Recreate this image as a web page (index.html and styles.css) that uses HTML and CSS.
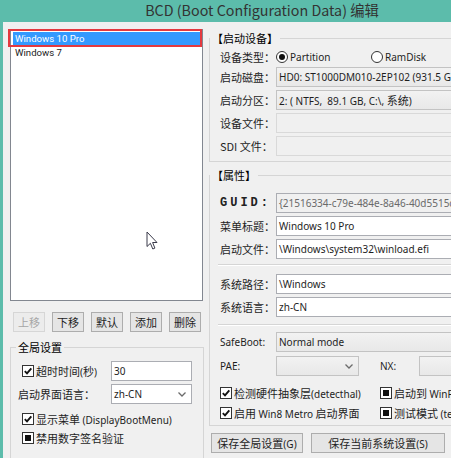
FILE: index.html
```html
<!DOCTYPE html>
<html lang="zh-CN">
<head>
    <meta charset="UTF-8">
    <title>BCD (Boot Configuration Data) 编辑</title>
    <link rel="stylesheet" href="styles.css">
</head>
<body>
<div class="window">
    <div class="titlebar">BCD (Boot Configuration Data) 编辑</div>

    <div class="client">
        <!-- 左侧：启动项列表 + 全局设置 -->
        <div class="left">
            <ul class="bootlist">
                <li class="selected">Windows 10 Pro</li>
                <li>Windows 7</li>
            </ul>

            <div class="list-buttons">
                <button class="btn small" disabled>上移</button>
                <button class="btn small">下移</button>
                <button class="btn small">默认</button>
                <button class="btn small">添加</button>
                <button class="btn small">删除</button>
            </div>

            <fieldset class="group global">
                <legend>全局设置</legend>
                <div class="rows">
                    <div class="grow">
                        <div class="cap check-cap"><span class="chk on"><svg viewBox="0 0 10 10"><path d="M1.8 5.2 L4 7.4 L8.3 2.4"/></svg></span><span>超时时间<span class="en">(</span>秒<span class="en">)</span></span></div>
                        <div class="box white short">30</div>
                    </div>
                    <div class="grow">
                        <div class="cap">启动界面语言：</div>
                        <div class="box white short combo">zh-CN<svg class="chev" viewBox="0 0 8 5"><polyline points="0.5,0.5 4,4 7.5,0.5"/></svg></div>
                    </div>
                    <div class="crow first">
                        <span class="chk on"><svg viewBox="0 0 10 10"><path d="M1.8 5.2 L4 7.4 L8.3 2.4"/></svg></span><span>显示菜单 <span class="en">(DisplayBootMenu)</span></span>
                    </div>
                    <div class="crow">
                        <span class="chk mixed"></span><span>禁用数字签名验证</span>
                    </div>
                </div>
            </fieldset>
        </div>

        <!-- 右侧：当前启动项的设置 -->
        <div class="right">
            <fieldset class="group device">
                <legend>【启动设备】</legend>
                <div class="rows">
                    <div class="frow radios">
                        <span class="lbl">设备类型：</span>
                        <span class="opt"><span class="radio on"></span><span class="en">Partition</span></span>
                        <span class="opt"><span class="radio"></span><span class="en">RamDisk</span></span>
                    </div>
                    <div class="frow">
                        <span class="lbl">启动磁盘：</span>
                        <div class="box gray">HD0: ST1000DM010-2EP102 (931.5 GB)</div>
                    </div>
                    <div class="frow">
                        <span class="lbl">启动分区：</span>
                        <div class="box gray">2: ( NTFS,  89.1 GB, C:\, <span class="zh">系统</span>)</div>
                    </div>
                    <div class="frow">
                        <span class="lbl">设备文件：</span>
                        <div class="box off"></div>
                    </div>
                    <div class="frow">
                        <span class="lbl">SDI 文件：</span>
                        <div class="box off"></div>
                    </div>
                </div>
            </fieldset>

            <fieldset class="group props">
                <legend>【属性】</legend>
                <div class="rows">
                    <div class="frow">
                        <span class="lbl guid">GUID:</span>
                        <div class="box readonly">{21516334-c79e-484e-8a46-40d5515c</div>
                    </div>
                    <div class="frow">
                        <span class="lbl">菜单标题：</span>
                        <div class="box white">Windows 10 Pro</div>
                    </div>
                    <div class="frow">
                        <span class="lbl">启动文件：</span>
                        <div class="box white">\Windows\system32\winload.efi</div>
                    </div>

                    <div class="sep sep1"></div>

                    <div class="frow path">
                        <span class="lbl">系统路径：</span>
                        <div class="box white">\Windows</div>
                    </div>
                    <div class="frow">
                        <span class="lbl">系统语言：</span>
                        <div class="box white">zh-CN</div>
                    </div>

                    <div class="sep sep2"></div>

                    <div class="frow safeboot">
                        <span class="lbl en">SafeBoot:</span>
                        <div class="box gray">Normal mode</div>
                    </div>
                    <div class="frow pae">
                        <span class="lbl en">PAE:</span>
                        <div class="box gray pae-box combo"><svg class="chev" viewBox="0 0 8 5"><polyline points="0.5,0.5 4,4 7.5,0.5"/></svg></div>
                        <span class="lbl nx en">NX:</span>
                        <div class="box gray"></div>
                    </div>

                    <div class="crow two first">
                        <span class="c1"><span class="chk on"><svg viewBox="0 0 10 10"><path d="M1.8 5.2 L4 7.4 L8.3 2.4"/></svg></span><span>检测硬件抽象层<span class="en">(detecthal)</span></span></span>
                        <span class="c2"><span class="chk mixed"></span><span>启动到 <span class="en">WinPE</span></span></span>
                    </div>
                    <div class="crow two">
                        <span class="c1"><span class="chk on"><svg viewBox="0 0 10 10"><path d="M1.8 5.2 L4 7.4 L8.3 2.4"/></svg></span><span>启用 <span class="en">Win8 Metro</span> 启动界面</span></span>
                        <span class="c2"><span class="chk mixed"></span><span>测试模式 <span class="en">(testsigning)</span></span></span>
                    </div>
                </div>
            </fieldset>

            <div class="save-buttons">
                <button class="btn save-global">保存全局设置<span class="en">(G)</span></button>
                <button class="btn save-current">保存当前系统设置<span class="en">(S)</span></button>
            </div>
        </div>
    </div>

    <!-- 鼠标指针 -->
    <svg class="cursor" viewBox="0 0 13 20">
        <path d="M1 1 L1 15.5 L4.4 12.3 L6.8 18 L8.9 17.1 L6.6 11.5 L11 11.5 Z"/>
    </svg>
</div>
</body>
</html>
```

FILE: styles.css
```css
* {
    box-sizing: border-box;
}

html, body {
    margin: 0;
    padding: 0;
}

body {
    width: 451px;
    height: 458px;
    overflow: hidden;
    background: #f0f0f0;
    font-family: "Noto Sans CJK SC", "Noto Sans", sans-serif;
    font-size: 11px;
    color: #1e1e1e;
}

/* 西文部分 */
.en,
.box {
    font-family: "Noto Sans", "Noto Sans CJK SC", sans-serif;
    font-size: 10px;
}

.box .zh {
    font-family: "Noto Sans CJK SC", sans-serif;
    font-size: 11px;
}

.window {
    position: relative;
    width: 524px;
    height: 458px;
    overflow: hidden;
}

/* 标题栏 */
.titlebar {
    height: 22px;
    padding-bottom: 2px;
    background: #5cbcab;
    display: flex;
    justify-content: center;
    align-items: center;
    font-size: 14.3px;
    line-height: 20px;
    color: #333;
}

.client {
    display: flex;
    height: 436px;
    overflow: hidden;
    border-left: 3px solid #5cbcab;
    background: #f0f0f0;
}

/* 左侧 */
.left {
    width: 206px;
    flex: none;
    padding: 7px 0 0 7px;
    display: flex;
    flex-direction: column;
}

.left > *,
.right > * {
    flex-shrink: 0;
}

.bootlist {
    list-style: none;
    margin: 0;
    padding: 2px;
    width: 193px;
    height: 272px;
    border: 1px solid #828790;
    background: #fff;
    font-family: Roboto, sans-serif;
    font-size: 9.6px;
}

.bootlist li {
    position: relative;
    height: 14px;
    line-height: 14px;
    padding-left: 2px;
    color: #222;
}

.bootlist li.selected {
    background: #3399ff;
    color: #fff;
}

/* 红框标注 */
.bootlist li.selected::after {
    content: "";
    position: absolute;
    left: -5px;
    right: -2px;
    top: -3px;
    bottom: -1px;
    border: 2px solid #e4393f;
}

.list-buttons {
    display: flex;
    gap: 7px;
    margin-top: 11px;
    padding-left: 3px;
}

.btn {
    height: 20px;
    padding: 0;
    border: 1px solid #adadad;
    background: #e5e5e5;
    font: inherit;
    line-height: 18px;
    color: #1e1e1e;
    white-space: nowrap;
}

.btn.small {
    width: 32px;
}

.btn:disabled {
    color: #a6a6a6;
    border-color: #d6d6d6;
    background: #ececec;
}

/* 分组框 */
.group {
    margin: 0;
    padding: 0;
    min-width: 0;
    border: 1px solid #d5d5d5;
}

.group legend {
    padding: 0 2px;
    line-height: 16px;
    color: #000;
}

.global {
    margin-top: 7px;
    width: 194px;
    height: 130px;
}

.global legend {
    margin-left: 5px;
}

.global .rows {
    padding: 6px 0 0 7px;
}

.grow {
    display: flex;
    align-items: center;
    height: 20px;
}

.grow + .grow {
    margin-top: 3px;
}

.cap {
    width: 93px;
    flex: none;
    display: flex;
    align-items: center;
}

.check-cap {
    padding-left: 4px;
}

.box {
    height: 20px;
    flex: 1;
    min-width: 0;
    padding-left: 2px;
    border: 1px solid #abadb3;
    line-height: 18px;
    white-space: pre;
    overflow: hidden;
    position: relative;
}

.box.short {
    flex: none;
    width: 81px;
}

.box.white {
    background: #fff;
}

.box.gray {
    background: linear-gradient(#f2f2f2, #e8e8e8);
    border-color: #c3c3c3;
}

.box.off {
    background: #f0f0f0;
    border-color: #d9d9d9;
}

.box.readonly {
    background: #f0f0f0;
    color: #6a6a6a;
}

.chev {
    position: absolute;
    right: 5px;
    top: 7px;
    width: 8px;
    height: 5px;
    fill: none;
    stroke: #6b6b6b;
    stroke-width: 1.3;
}

/* 复选框行 */
.crow {
    display: flex;
    align-items: center;
    height: 19px;
    padding-left: 4px;
    white-space: nowrap;
}

.crow.first {
    margin-top: 5px;
}

.chk {
    width: 12px;
    height: 12px;
    flex: none;
    margin-right: 2px;
    border: 1px solid #333;
    background: #fff;
    position: relative;
    display: inline-flex;
    align-items: center;
    justify-content: center;
}

.chk svg {
    width: 10px;
    height: 10px;
    fill: none;
    stroke: #111;
    stroke-width: 1.9;
}

.chk.mixed::after {
    content: "";
    width: 6px;
    height: 6px;
    background: #111;
}

/* 右侧 */
.right {
    flex: 1;
    padding-top: 8px;
    display: flex;
    flex-direction: column;
}

.right .rows {
    padding: 2px 8px 5px 10px;
}

.frow {
    display: flex;
    align-items: center;
    height: 20px;
    margin-top: 3px;
    white-space: nowrap;
}

.frow.radios {
    height: 18px;
    margin-top: 0;
}

.frow.radios + .frow {
    margin-top: 1px;
}

.lbl {
    width: 56px;
    flex: none;
}

.lbl.guid {
    font-family: "Liberation Mono", monospace;
    font-weight: bold;
    font-size: 12px;
    letter-spacing: 3px;
    color: #222;
}

.opt {
    display: flex;
    align-items: center;
    width: 95px;
}

.radio {
    width: 12px;
    height: 12px;
    margin-right: 2px;
    border: 1px solid #333;
    border-radius: 50%;
    background: #fff;
    display: inline-flex;
    align-items: center;
    justify-content: center;
}

.radio.on::after {
    content: "";
    width: 6px;
    height: 6px;
    border-radius: 50%;
    background: #111;
}

.props {
    margin-top: 5px;
}

.props .rows {
    padding-top: 7px;
    padding-bottom: 3px;
}

.sep {
    height: 2px;
    margin-left: -2px;
    border-top: 1px solid #d5d5d5;
    border-bottom: 1px solid #fff;
}

.sep1 {
    margin-top: 5px;
}

.frow.path {
    margin-top: 8px;
}

.sep2 {
    margin-top: 7px;
}

.frow.safeboot {
    margin-top: 6px;
}

.frow.pae {
    margin-top: 4px;
}

.box.pae-box {
    flex: none;
    width: 83px;
}

.lbl.nx {
    width: 39px;
    margin-left: 21px;
}

.crow.two {
    padding-left: 0;
}

.crow.two.first {
    margin-top: 8px;
    height: 18px;
}

.crow.two + .crow.two {
    margin-top: 2px;
    height: 18px;
}

.c1, .c2 {
    display: flex;
    align-items: center;
}

.c1 {
    width: 160px;
}

.save-buttons {
    display: flex;
    gap: 8px;
    margin-top: 7px;
    padding-left: 2px;
}

.save-global {
    width: 92px;
}

.save-current {
    width: 134px;
}

.cursor {
    position: absolute;
    left: 146px;
    top: 231px;
    width: 13px;
    height: 20px;
    fill: #fff;
    stroke: #3a3a4a;
    stroke-width: 1;
}
```
